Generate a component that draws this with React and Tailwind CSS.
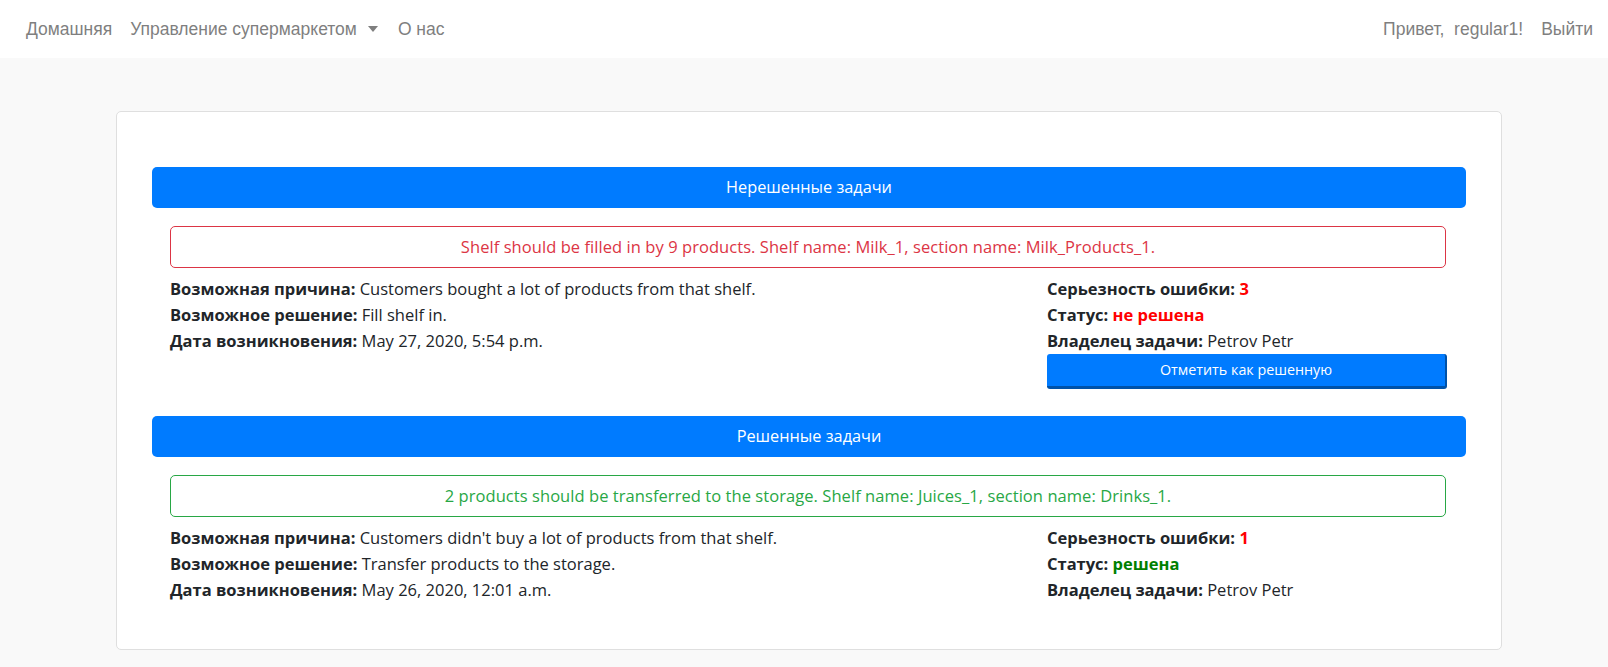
function Row({ label, children }) {
  return (
    <div className="whitespace-nowrap">
      <span className="font-bold">{label}</span> {children}
    </div>
  );
}

function Section({ title, alertText, tone, cause, solution, date, severity, status, statusColor, withButton }) {
  const alertCls =
    tone === "red"
      ? "border-[#dc3545] text-[#dc3545]"
      : "border-[#28a745] text-[#28a745]";
  return (
    <div>
      <div className="h-[41px] rounded-[5px] bg-[#007bff] text-white flex items-center justify-center text-[16.3px]">
        {title}
      </div>
      <div className="ml-[18px] mr-[20px]">
        <div
          className={`mt-[18px] h-[42px] border rounded-[5px] flex items-center justify-center text-[16.5px] tracking-[0.06px] ${alertCls}`}
        >
          {alertText}
        </div>
        <div className="mt-[8px] grid grid-cols-[877px_400px] text-[16.5px] leading-[26px] text-[#212529]">
          <div>
            <Row label="Возможная причина:">{cause}</Row>
            <Row label="Возможное решение:">{solution}</Row>
            <Row label="Дата возникновения:">{date}</Row>
          </div>
          <div>
            <div className="whitespace-nowrap">
              <span className="font-bold">Серьезность ошибки:</span>{" "}
              <span className="font-bold text-[#ff0000]">{severity}</span>
            </div>
            <div className="whitespace-nowrap">
              <span className="font-bold">Статус:</span>{" "}
              <span className={`font-bold ${statusColor}`}>{status}</span>
            </div>
            <Row label="Владелец задачи:">Petrov Petr</Row>
            {withButton && (
              <button className="w-full h-[35px] bg-[#007bff] text-white text-[14.3px] rounded-[3px] border-r-2 border-b-[3px] border-[#0052a8] flex items-center justify-center">
                Отметить как решенную
              </button>
            )}
          </div>
        </div>
      </div>
    </div>
  );
}

export default function App() {
  return (
    <div className="min-h-screen bg-[#f9f9f9]" style={{ fontFamily: '"Open Sans", sans-serif' }}>
      <nav
        className="h-[58px] bg-white flex items-center justify-between pl-[26px] pr-[15px] text-[17.5px] text-[#7f7f7f]"
        style={{ fontFamily: '"Liberation Sans", Arial, sans-serif' }}
      >
        <div className="flex items-center">
          <span>Домашняя</span>
          <span className="ml-[18px] flex items-center">
            Управление супермаркетом
            <span className="ml-[11px] inline-block w-0 h-0 border-l-[5px] border-r-[5px] border-t-[6px] border-l-transparent border-r-transparent border-t-[#7f7f7f]" />
          </span>
          <span className="ml-[20px]">О нас</span>
        </div>
        <div className="flex items-center gap-[18px]">
          <span className="whitespace-pre">Привет,  regular1!</span>
          <span>Выйти</span>
        </div>
      </nav>
      <main className="pt-[53px] pb-[17px]">
        <div className="ml-[116px] w-[1386px] bg-white border border-[#dfdfdf] rounded-[5px] pt-[55px] px-[35px] pb-[46px]">
          <Section
            title="Нерешенные задачи"
            alertText="Shelf should be filled in by 9 products. Shelf name: Milk_1, section name: Milk_Products_1."
            tone="red"
            cause="Customers bought a lot of products from that shelf."
            solution="Fill shelf in."
            date="May 27, 2020, 5:54 p.m."
            severity="3"
            status="не решена"
            statusColor="text-[#ff0000]"
            withButton
          />
          <div className="mt-[27px]">
            <Section
              title="Решенные задачи"
              alertText="2 products should be transferred to the storage. Shelf name: Juices_1, section name: Drinks_1."
              tone="green"
              cause="Customers didn't buy a lot of products from that shelf."
              solution="Transfer products to the storage."
              date="May 26, 2020, 12:01 a.m."
              severity="1"
              status="решена"
              statusColor="text-[#008000]"
            />
          </div>
        </div>
      </main>
    </div>
  );
}
